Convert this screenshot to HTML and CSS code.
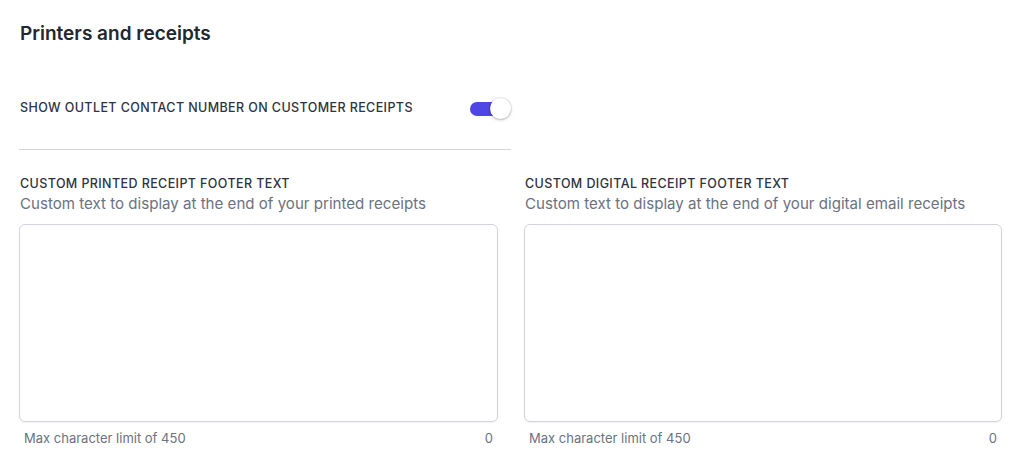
FILE: index.html
```html
<!DOCTYPE html>
<html lang="en">
<head>
<meta charset="utf-8">
<title>Printers and receipts</title>
<link rel="stylesheet" href="styles.css">
</head>
<body>
<main class="settings">
  <h2 class="settings-title">Printers and receipts</h2>

  <div class="toggle-row">
    <span class="field-label toggle-label">Show outlet contact number on customer receipts</span>
    <span class="switch" role="switch" aria-checked="true">
      <span class="switch-track"></span>
      <span class="switch-knob"></span>
    </span>
  </div>

  <hr class="divider">

  <div class="footer-fields">
    <div class="field">
      <div class="field-label">Custom printed receipt footer text</div>
      <div class="field-help">Custom text to display at the end of your printed receipts</div>
      <textarea class="field-input"></textarea>
      <div class="field-meta">
        <span>Max character limit of 450</span>
        <span>0</span>
      </div>
    </div>
    <div class="field">
      <div class="field-label">Custom digital receipt footer text</div>
      <div class="field-help">Custom text to display at the end of your digital email receipts</div>
      <textarea class="field-input"></textarea>
      <div class="field-meta">
        <span>Max character limit of 450</span>
        <span>0</span>
      </div>
    </div>
  </div>
</main>
</body>
</html>
```

FILE: styles.css
```css
* {
  box-sizing: border-box;
}

html, body {
  margin: 0;
  background: #ffffff;
}

body {
  font-family: Inter, "Noto Sans", "Liberation Sans", sans-serif;
  color: #2a2f3a;
}

.settings {
  padding: 22px 22px 0 19px;
}

.settings-title {
  margin: 0 0 0 1px;
  font-size: 19px;
  line-height: 24px;
  font-weight: 600;
  color: #23272f;
}

.field-label {
  font-size: 12.5px;
  line-height: 16px;
  font-weight: 500;
  text-transform: uppercase;
  letter-spacing: 0.4px;
  color: #2d3341;
}

.toggle-row {
  width: 492px;
  margin-top: 51px;
  display: flex;
  align-items: center;
  justify-content: space-between;
  height: 22px;
}

.toggle-label {
  font-size: 12.5px;
  letter-spacing: 0.4px;
  padding-left: 1px;
}

.switch {
  position: relative;
  width: 41px;
  height: 21px;
  display: inline-block;
}

.switch-track {
  position: absolute;
  left: 0;
  top: 4px;
  width: 36px;
  height: 14px;
  border-radius: 7px;
  background: #4f46e5;
}

.switch-knob {
  position: absolute;
  right: 0;
  top: 0;
  width: 21px;
  height: 21px;
  border-radius: 50%;
  background: #ffffff;
  box-shadow: 0 0 0 1px rgba(0, 0, 0, 0.06), 0 1px 3px rgba(0, 0, 0, 0.25);
}

.divider {
  width: 492px;
  margin: 30px 0 0;
  border: 0;
  border-top: 1px solid #d3d7de;
}

.footer-fields {
  margin-top: 26px;
  display: grid;
  grid-template-columns: 479px 478px;
  column-gap: 26px;
}

.field {
  display: flex;
  flex-direction: column;
}

.field .field-label {
  padding-left: 1px;
}

.field-help {
  margin-top: 2px;
  font-size: 15.1px;
  line-height: 20px;
  color: #6b7280;
  padding-left: 1px;
}

.field-input {
  margin-top: 10px;
  height: 198px;
  width: 100%;
  resize: none;
  border: 1px solid #d1d5db;
  border-radius: 6px;
  background: #ffffff;
  box-shadow: 0 1px 2px rgba(0, 0, 0, 0.06);
  font: inherit;
  padding: 8px 10px;
}

.field-meta {
  margin-top: 8px;
  display: flex;
  justify-content: space-between;
  padding: 0 5px 0 5px;
  font-size: 13px;
  line-height: 16px;
  color: #6b7280;
}
```
